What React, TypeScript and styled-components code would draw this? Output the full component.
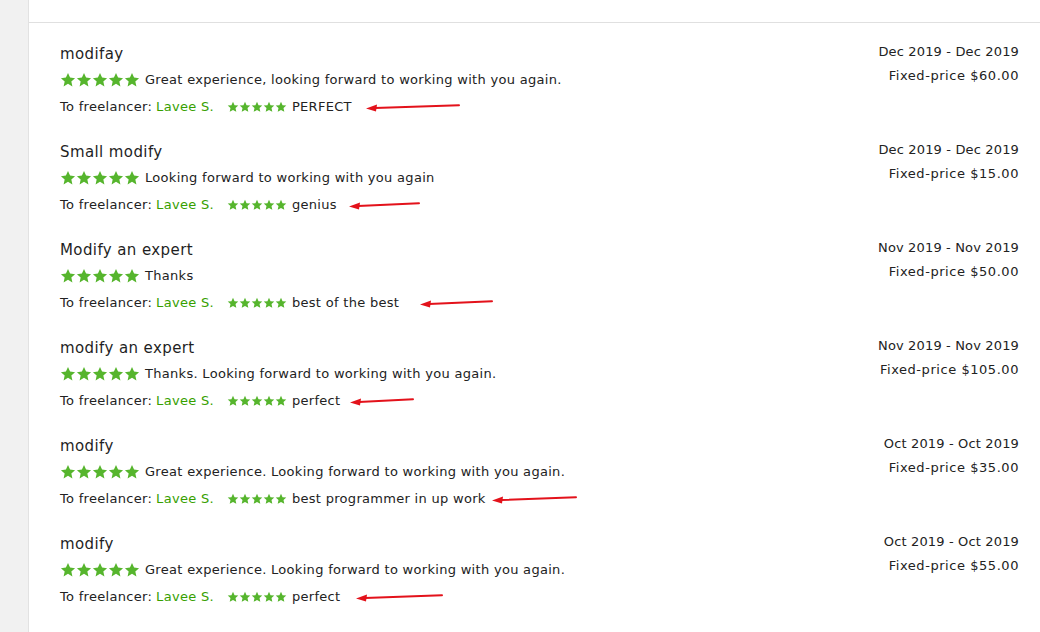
import React from 'react';
import styled, {createGlobalStyle} from 'styled-components';

const GlobalStyle = createGlobalStyle`
  html, body {
    margin: 0;
    padding: 0;
    background: #fff;
  }
  body {
    font-family: 'DejaVu Sans', 'Open Sans', sans-serif;
    color: #222;
  }
`;

const Page = styled.div`
  display: flex;
  width: 1040px;
  height: 632px;
  overflow: hidden;
`;

const Gutter = styled.div`
  width: 28px;
  flex-shrink: 0;
  background: #f1f1f1;
  border-right: 1px solid #e2e2e2;
`;

const Main = styled.div`
  flex: 1;
  background: #fff;
`;

const TopBar = styled.div`
  height: 22px;
  border-bottom: 1px solid #e0e0e0;
`;

const List = styled.div`
  padding: 17px 21px 0 31px;
`;

const Row = styled.div`
  display: flex;
  justify-content: space-between;
  height: 98px;
`;

const Left = styled.div`
  display: flex;
  flex-direction: column;
`;

const Title = styled.div`
  height: 27px;
  line-height: 28px;
  font-size: 15px;
  letter-spacing: 0.4px;
  color: #1f1f1f;
`;

const Line = styled.div<{$h?: number}>`
  display: flex;
  align-items: center;
  height: ${p => p.$h || 26}px;
  font-size: 13px;
  letter-spacing: 0.3px;
  color: #222;
  white-space: nowrap;
`;

const Stars = styled.span<{$gap?: number}>`
  display: inline-flex;
  margin-right: ${p => p.$gap || 6}px;
`;

const Green = styled.span`
  color: #37a000;
  margin-left: 4px;
  margin-right: 13px;
`;

const Arrow = styled.svg`
  display: block;
  flex-shrink: 0;
`;

const Right = styled.div`
  display: flex;
  flex-direction: column;
  align-items: flex-end;
`;

const Meta = styled.div<{$spacing: number}>`
  height: 24px;
  line-height: 24px;
  font-size: 13px;
  letter-spacing: ${p => p.$spacing}px;
  color: #222;
`;

const Star = ({size}: {size: number}) => (
  <svg width={size} height={size} viewBox="0 0 24 24">
    <polygon
      points="12,1.5 15.1,8.4 22.6,9.2 17,14.2 18.6,21.6 12,17.8 5.4,21.6 7,14.2 1.4,9.2 8.9,8.4"
      fill="#56b52d"
    />
  </svg>
);

const StarRow = ({size, gap}: {size: number; gap?: number}) => (
  <Stars $gap={gap}>
    {[0, 1, 2, 3, 4].map(i => (
      <Star key={i} size={size} />
    ))}
  </Stars>
);

const RedArrow = ({gap, len}: {gap: number; len: number}) => (
  <Arrow
    width={len}
    height={10}
    viewBox={`0 0 ${len} 10`}
    style={{marginLeft: gap}}
  >
    <path d={`M9 6 L${len - 1} 3.2`} stroke="#e3121b" strokeWidth="2" strokeLinecap="round" />
    <polygon points="0,6.6 11,2.6 10,9.4" fill="#e3121b" />
  </Arrow>
);

const jobs = [
  {
    title: 'modifay',
    comment: 'Great experience, looking forward to working with you again.',
    feedback: 'PERFECT',
    dates: 'Dec 2019 - Dec 2019',
    price: 'Fixed-price $60.00',
    gap: 14,
    len: 94,
  },
  {
    title: 'Small modify',
    comment: 'Looking forward to working with you again',
    feedback: 'genius',
    dates: 'Dec 2019 - Dec 2019',
    price: 'Fixed-price $15.00',
    gap: 12,
    len: 71,
  },
  {
    title: 'Modify an expert',
    comment: 'Thanks',
    feedback: 'best of the best',
    dates: 'Nov 2019 - Nov 2019',
    price: 'Fixed-price $50.00',
    gap: 21,
    len: 73,
  },
  {
    title: 'modify an expert',
    comment: 'Thanks. Looking forward to working with you again.',
    feedback: 'perfect',
    dates: 'Nov 2019 - Nov 2019',
    price: 'Fixed-price $105.00',
    gap: 10,
    len: 64,
  },
  {
    title: 'modify',
    comment: 'Great experience. Looking forward to working with you again.',
    feedback: 'best programmer in up work',
    dates: 'Oct 2019 - Oct 2019',
    price: 'Fixed-price $35.00',
    gap: 6,
    len: 85,
  },
  {
    title: 'modify',
    comment: 'Great experience. Looking forward to working with you again.',
    feedback: 'perfect',
    dates: 'Oct 2019 - Oct 2019',
    price: 'Fixed-price $55.00',
    gap: 16,
    len: 87,
  },
];

const App = () => (
  <>
    <GlobalStyle />
    <Page>
      <Gutter />
      <Main>
        <TopBar />
        <List>
          {jobs.map((job, i) => (
            <Row key={i}>
              <Left>
                <Title>{job.title}</Title>
                <Line $h={25}>
                  <StarRow size={16} gap={5} />
                  {job.comment}
                </Line>
                <Line $h={29}>
                  To freelancer:
                  <Green>Lavee S.</Green>
                  <StarRow size={12} gap={5} />
                  {job.feedback}
                  <RedArrow gap={job.gap} len={job.len} />
                </Line>
              </Left>
              <Right>
                <Meta $spacing={0.15}>{job.dates}</Meta>
                <Meta $spacing={0.55}>{job.price}</Meta>
              </Right>
            </Row>
          ))}
        </List>
      </Main>
    </Page>
  </>
);

export default App;
